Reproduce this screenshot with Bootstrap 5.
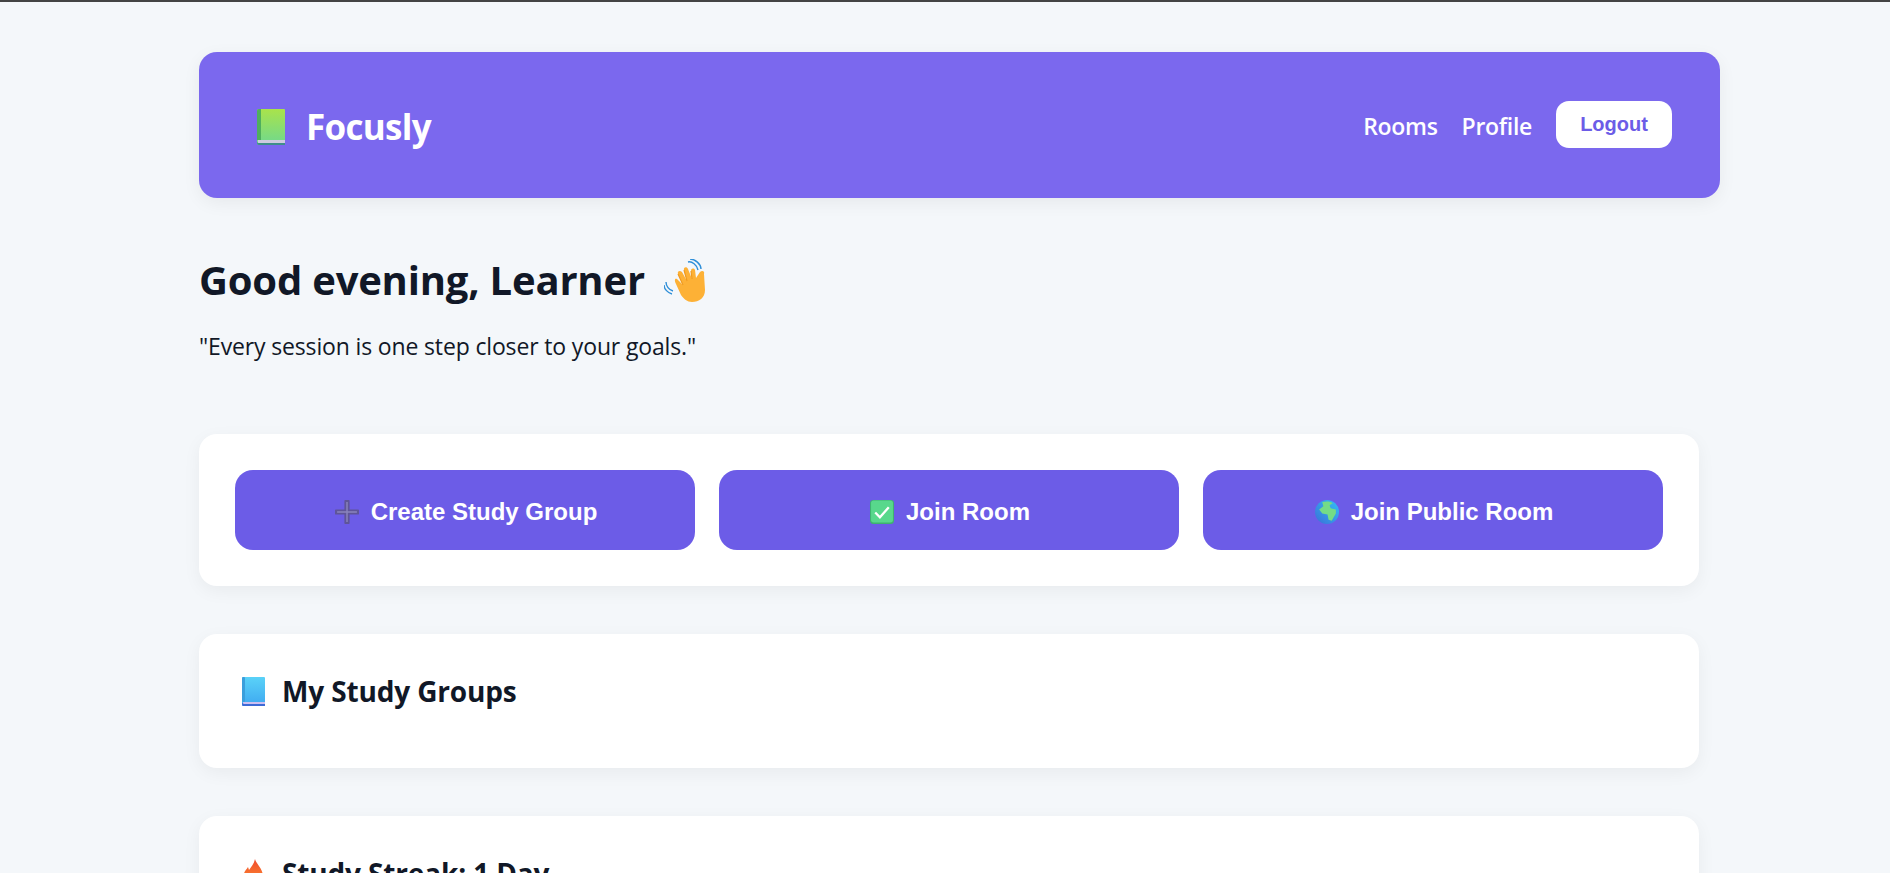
<!DOCTYPE html>
<html lang="en">
<head>
    <meta charset="UTF-8">
    <meta name="viewport" content="width=device-width, initial-scale=1.0">
    <title>Focusly</title>
    <link href="https://cdn.jsdelivr.net/npm/bootstrap@5.3.0/dist/css/bootstrap.min.css" rel="stylesheet">
    <style>
        html, body { overflow: hidden; height: 873px; }
        body {
            background: #f4f7fa;
            border-top: 2px solid #444;
            font-family: "Open Sans", "Noto Sans", sans-serif;
            color: #111827;
        }

        /* page column */
        .page-wrap { width: 1500px; margin-left: 199px; padding-top: 50px; }

        /* header */
        .top-bar {
            width: 1521px;
            height: 146px;
            padding: 0 48px 0 58px;
            background: #7b68ee;
            border-radius: 18px;
            box-shadow: 0 5px 18px rgba(0, 0, 0, 0.06);
            color: #fff;
        }
        .brand-name { font-size: 35px; font-weight: 700; letter-spacing: -0.7px; color: #fff; text-decoration: none; gap: 21px; margin-top: 4px; }
        .top-link { font-size: 23px; font-weight: 600; letter-spacing: -0.3px; color: #fff; text-decoration: none; margin-top: 2px; }
        .logout-btn {
            width: 116px;
            height: 47px;
            padding: 0;
            margin-top: -2px;
            background: #fff;
            border: 0;
            border-radius: 13px;
            color: #6c5ce7;
            font: 700 20px "Liberation Sans", Arial, sans-serif;
        }
        .logout-btn:hover { background: #fff; color: #6c5ce7; }

        /* greeting */
        .hello-title { font-size: 40px; font-weight: 700; letter-spacing: -0.2px; margin: 0; line-height: 54px; gap: 19px; }
        .hello-sub { font-size: 23px; letter-spacing: -0.15px; margin: 24px 0 0; line-height: 30px; }
        .hello-box { padding-top: 55px; padding-bottom: 73px; }

        /* white panels */
        .panel-box {
            border: 0;
            border-radius: 18px;
            background: #fff;
            box-shadow: 0 5px 18px rgba(0, 0, 0, 0.05);
            margin-bottom: 48px;
        }
        .panel-actions { padding: 36px; }
        .panel-list { height: 134px; padding: 36px 43px 0; }
        .panel-title { font-size: 28px; font-weight: 700; letter-spacing: -0.15px; margin: 0; line-height: 42px; gap: 17px; }

        .action-btn {
            flex: 1 1 0;
            height: 80px;
            padding: 4px 12px 0 14px;
            background: #6c5ce7;
            border: 0;
            border-radius: 18px;
            color: #fff;
            font: 700 24px "Liberation Sans", Arial, sans-serif;
            gap: 12px;
        }
        .action-btn:hover { background: #6c5ce7; color: #fff; }
        .emo-book { width: 28px; height: 36px; }
        .emo-wave { width: 42px; height: 43px; }
        .emo-small { width: 24px; height: 24px; }
        .emo-title { width: 23px; height: 29px; }
    </style>
</head>
<body>
    <div class="page-wrap">
        <header class="top-bar d-flex justify-content-between align-items-center">
            <a class="brand-name d-flex align-items-center" href="#">
                <svg class="emo-book" viewBox="0 0 28 36">
                    <defs><linearGradient id="gb" x1="0" y1="0" x2="0" y2="1"><stop offset="0" stop-color="#a9e34b"/><stop offset="1" stop-color="#6fd88f"/></linearGradient></defs>
                    <path d="M2 0h25a1 1 0 0 1 1 1v35H2a2 2 0 0 1-2-2V2a2 2 0 0 1 2-2z" fill="url(#gb)"/>
                    <path d="M2 0h2v31H0V2a2 2 0 0 1 2-2z" fill="#4fae5e"/>
                    <rect x="1" y="31" width="27" height="3" fill="#cfcbe0"/>
                    <path d="M0 33v1a2 2 0 0 0 2 2h26v-2H2a2 2 0 0 1-2-1z" fill="#3f8f8a"/>
                </svg>
                Focusly
            </a>
            <nav class="d-flex align-items-center gap-4">
                <a class="top-link" href="#">Rooms</a>
                <a class="top-link" href="#">Profile</a>
                <button class="btn logout-btn">Logout</button>
            </nav>
        </header>

        <section class="hello-box">
            <h1 class="hello-title d-flex align-items-center">
                Good evening, Learner
                <svg class="emo-wave" viewBox="0 0 42 43">
                    <path d="M12 25C10 21 11 19 13 20L19 26 14 15C13 12 16 11 18 13L23 22 20 11C19 8 23 7 24 10L28 20 27 12C27 9 30 9 31 11L32 19 36 13C38 11 41 12 40 15L41 31C41 39 35 43 28 43 23 43 20 40 17 36z" fill="#fdb136"/>
                    <path d="M19 26 14 15M23 22 20 11M28 20 27 12" stroke="#f09a1e" stroke-width="1.2" fill="none"/>
                    <path d="M24 3C28 2 33 6 34 11M26 0C31 0 37 5 37 10" stroke="#2f8fd8" stroke-width="1.4" fill="none"/>
                    <path d="M2 23C2 27 5 31 9 32M0 26C0 30 4 34 8 35" stroke="#2f8fd8" stroke-width="1.4" fill="none"/>
                </svg>
            </h1>
            <p class="hello-sub">"Every session is one step closer to your goals."</p>
        </section>

        <div class="card panel-box panel-actions">
            <div class="d-flex gap-4">
                <button class="btn action-btn d-flex align-items-center justify-content-center">
                    <svg class="emo-small" viewBox="0 0 23 23">
                        <path d="M9 1.500a2.500 2.500 0 0 1 5 0V9h7.500a2.500 2.500 0 0 1 0 5H14v7.500a2.500 2.500 0 0 1-5 0V14H1.500a2.500 2.500 0 0 1 0-5H9z" fill="#5f5598"/>
                        <path d="M11.500 2v19M2 11.500h19" stroke="#8a84bd" stroke-width="1.400"/>
                    </svg>
                    Create Study Group
                </button>
                <button class="btn action-btn d-flex align-items-center justify-content-center">
                    <svg class="emo-small" viewBox="0 0 23 23">
                        <rect width="23" height="23" rx="3" fill="#3fb271"/>
                        <rect x="1" y="0.500" width="21" height="21" rx="2.500" fill="#58d88c"/>
                        <path d="M5 12l4.500 4.500L18 7" stroke="#fff" stroke-width="2.200" fill="none"/>
                    </svg>
                    Join Room
                </button>
                <button class="btn action-btn d-flex align-items-center justify-content-center">
                    <svg class="emo-small" viewBox="0 0 23 23">
                        <defs><linearGradient id="gl" x1="1" y1="0" x2="0" y2="1"><stop offset="0" stop-color="#33c0f5"/><stop offset="1" stop-color="#3a6fd8"/></linearGradient></defs>
                        <circle cx="11.500" cy="11.500" r="11.500" fill="url(#gl)"/>
                        <path d="M7 2C10 1 15 1 17 3L14 5 15 8 20 9 20 13 16 20 13 19 12 14 7 13 4 9 8 6z" fill="#74dc86"/>
                    </svg>
                    Join Public Room
                </button>
            </div>
        </div>

        <div class="card panel-box panel-list">
            <h2 class="panel-title d-flex align-items-center">
                <svg class="emo-title" viewBox="0 0 23 29">
                    <defs><linearGradient id="gbb" x1="0" y1="0" x2="0" y2="1"><stop offset="0" stop-color="#5ad2f8"/><stop offset="1" stop-color="#3ea8f0"/></linearGradient></defs>
                    <path d="M1.500 0H22a1 1 0 0 1 1 1v28H1.500A1.500 1.500 0 0 1 0 27.500v-26A1.500 1.500 0 0 1 1.500 0z" fill="url(#gbb)"/>
                    <rect width="3" height="25" rx="1" fill="#3a9fdc"/>
                    <rect x="1" y="25" width="22" height="2" fill="#cdbff0"/>
                    <path d="M0 26v1.500A1.500 1.500 0 0 0 1.500 29H23v-2H2z" fill="#3d6ad6"/>
                </svg>
                My Study Groups
            </h2>
        </div>

        <div class="card panel-box panel-list">
            <h2 class="panel-title d-flex align-items-center">
                <svg class="emo-title" viewBox="0 0 23 29">
                    <defs><linearGradient id="gf" x1="0" y1="0" x2="0" y2="1"><stop offset="0" stop-color="#f0492e"/><stop offset="1" stop-color="#ff9a2e"/></linearGradient></defs>
                    <path d="M13 0C14 5 21 9 21 18 21 25 16 29 11 29 5 29 1 25 1 19 1 14 4 11 6 8L7 11C9 8 12 5 13 0z" fill="url(#gf)"/>
                </svg>
                Study Streak: 1 Day
            </h2>
        </div>
    </div>

    <script src="https://cdn.jsdelivr.net/npm/bootstrap@5.3.0/dist/js/bootstrap.bundle.min.js"></script>
</body>
</html>
